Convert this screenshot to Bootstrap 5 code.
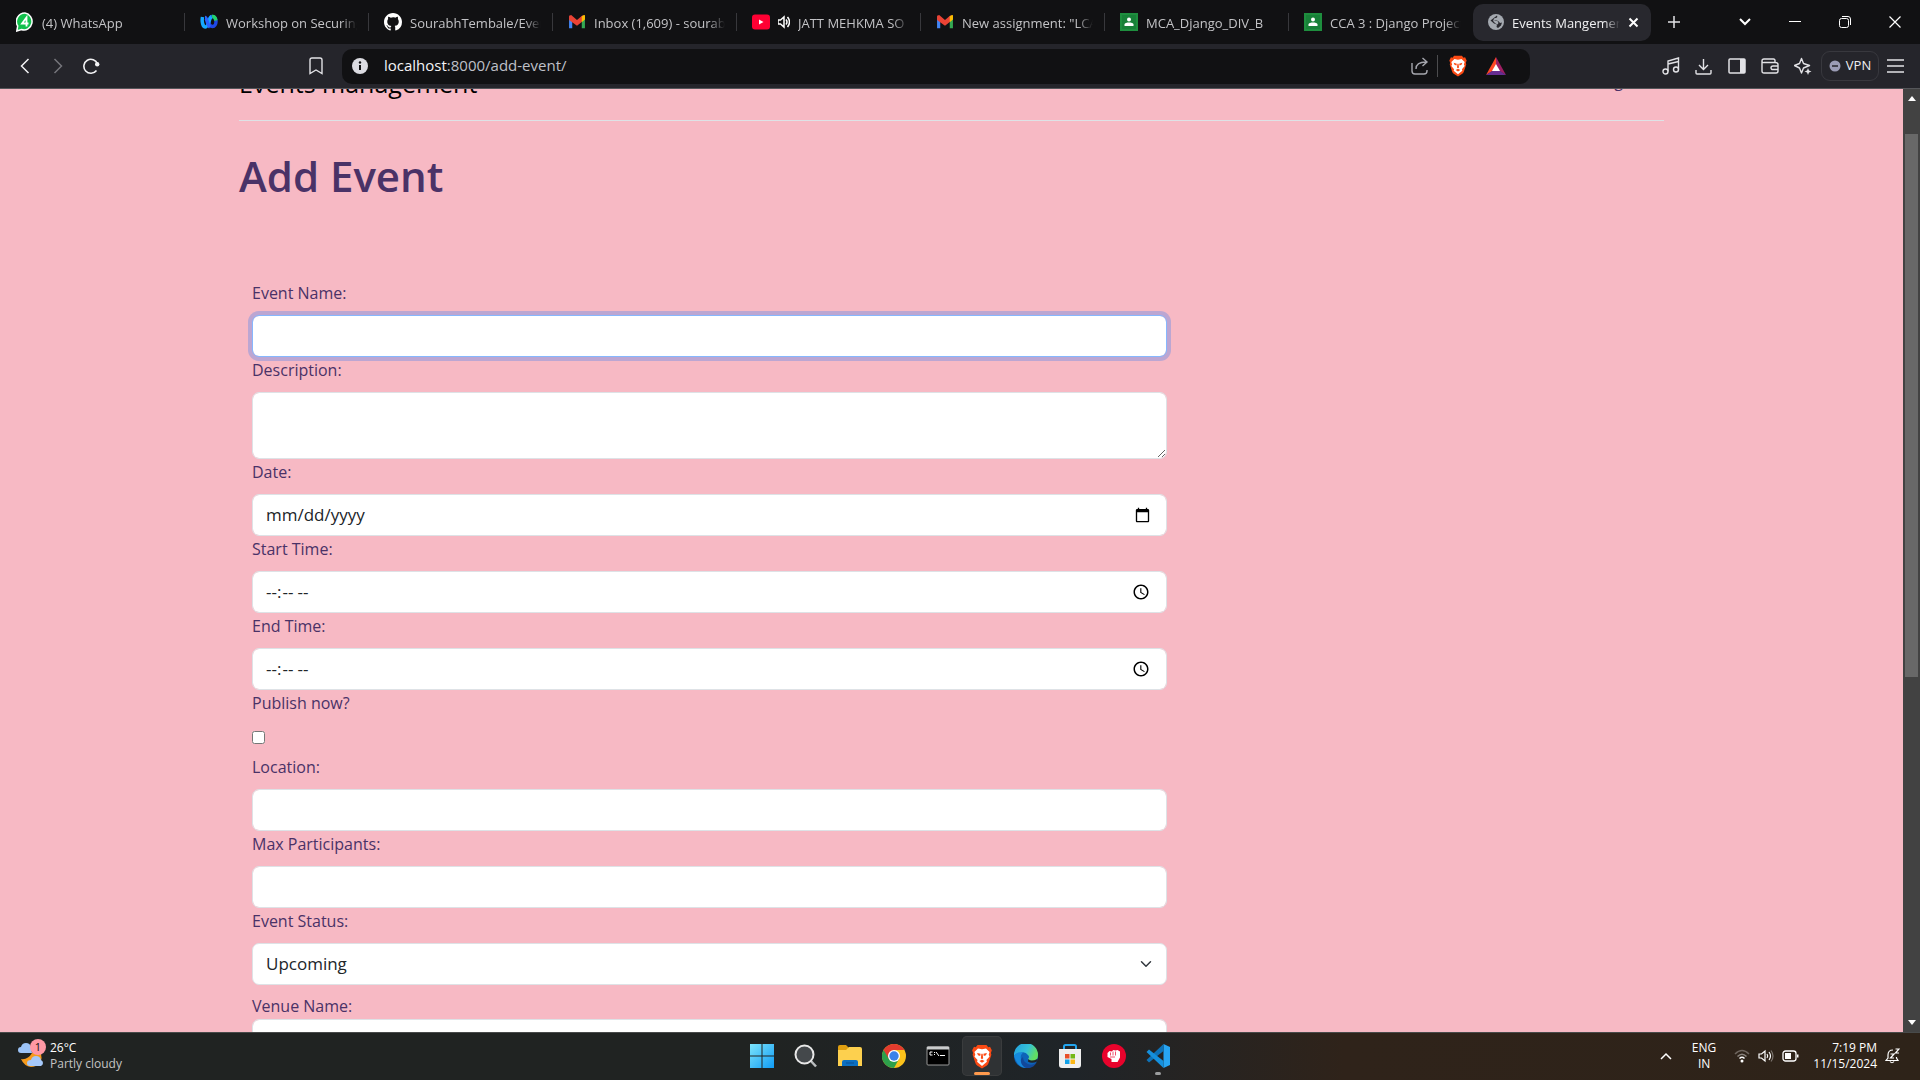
<!DOCTYPE html>
<html lang="en">
<head>
<meta charset="utf-8">
<meta name="viewport" content="width=device-width, initial-scale=1">
<title>Events Mangement</title>
<link href="https://cdn.jsdelivr.net/npm/bootstrap@5.3.0/dist/css/bootstrap.min.css" rel="stylesheet">
<style>
  body { font-family: "Open Sans", "Noto Sans", sans-serif; background: #111113; }
  .tool-btn { background: none; border: 0; padding: 0; color: #e2e2e6; display: flex; align-items: center; justify-content: center; flex: none; }
  svg { display: block; flex: none; }

  /* tab strip */
  .tab-strip { height: 44px; background: #111113; padding-left: 1px; font-size: 13px; color: #c3c3c6; }
  .tab-item { width: 184px; height: 37px; padding: 0 12px 0 15px; gap: 8px; color: inherit; text-decoration: none; flex: 0 1 184px; min-width: 0; }
  .tab-item + .tab-item::before { content: ""; width: 1px; height: 18px; background: #38383c; margin-left: -16px; margin-right: 7px; flex: none; }
  .tab-item.tab-active::before { display: none; }
  .tab-label { flex: 1 1 0; min-width: 0; overflow: hidden; white-space: nowrap; line-height: 20px; padding-top: 2px; -webkit-mask-image: linear-gradient(90deg, #000 calc(100% - 16px), transparent); mask-image: linear-gradient(90deg, #000 calc(100% - 16px), transparent); }
  .tab-active { width: 178px; flex-basis: 178px; background: #28282e; border-radius: 10px; color: #f0f0f2; }
  .win-btn { width: 50px; height: 37px; }

  /* address row */
  .address-row { height: 45px; background: #25252b; border-bottom: 1px solid #55565a; }
  .nav-tool { width: 33px; height: 36px; }
  .bookmark-tool { margin-left: 192px; }
  .address-box { height: 35px; background: #111113; border-radius: 10px; margin-left: 10px; flex: 1 1 0; padding: 0 24px 0 10px; }
  .address-text { font-size: 15px; color: #bfc0c8; line-height: 20px; padding-bottom: 2px; }
  .address-host { color: #f4f4f6; }
  .right-tools { margin-left: 124px; }
  .vpn-btn { border: 1px solid #38383e; border-radius: 9px; width: 58px; height: 30px; font-size: 13px; gap: 5px; color: #efeff2; margin-left: 2px; }

  /* page */
  .page-view { background: #f7b9c4; color: #4a3267; }
  .page-scroll { overflow: hidden; min-width: 0; }
  .page-wrap { max-width: 1449px; padding: 0 12px; margin-top: -29px; }
  .site-head { border-bottom: 1px solid #dee2e6; padding-top: 4px; margin-bottom: 24px; height: 61px; }
  .site-name { font-size: 25px; line-height: 38px; color: #000; text-decoration: none; }
  .site-link { font-size: 16px; line-height: 34px; color: #4a3267; text-decoration: none; padding: 0 16px; }
  .page-title { font-size: 42px; line-height: 53px; font-weight: 600; margin-bottom: 78px; padding-top: 4px; }
  .form-box { padding: 0 22px 0 13px; }
  .field-label { display: block; font-size: 16px; line-height: 26px; margin-bottom: 9px; width: max-content; }
  .form-box .form-control, .form-box .form-select { height: 42px; font-size: 17px; line-height: 26px; border-radius: 7px; padding: 7px 13px; color: #212529; }
  .form-box textarea.form-control { height: 67px; }
  .form-box .field-focused { border-color: #86b7fe; box-shadow: 0 0 0 4px rgba(13, 110, 253, .25); }
  .check-line { height: 29px; padding-top: 6px; }
  .check-line input { display: block; width: 13px; height: 13px; margin: 0; }
  .scroll-track { width: 17px; background: #424242; flex: none; padding: 7px 2px 7px 2px; }
  .scroll-thumb { background: #686868; height: 543px; margin-top: 33px; }

  /* taskbar */
  .task-bar { height: 48px; border-top: 1px solid #484a4a; padding-bottom: 1px; color: #fff; font-size: 12px; line-height: 16px;
    background: linear-gradient(90deg, #202322 0, #202322 40%, #1f2428 56%, #2f231a 70%, #2e2319 100%); }
  .task-side { flex: 1 1 0; }
  .task-btn { width: 40px; height: 40px; border-radius: 5px; position: relative; }
  .task-open { background: #2f3234; box-shadow: inset 0 0 0 1px #3a3c3d; }
  .task-open::after, .task-run::after { content: ""; position: absolute; bottom: 1px; left: 12px; width: 16px; height: 3px; border-radius: 2px; background: #ff9a4d; }
  .task-run::after { left: 17px; width: 6px; background: #9b9d9e; }
  .weather-icon { margin-left: 17px; margin-bottom: 6px; overflow: visible; }
  .weather-note { color: #c4c4c4; }
  .tray-lang { margin: 0 18px 0 20px; }
  .tray-clock { margin: 0 8px 0 14px; }
  .tray-bell { margin-right: 20px; }
</style>
<script src="https://cdn.jsdelivr.net/npm/bootstrap@5.3.0/dist/js/bootstrap.bundle.min.js"></script>
</head>
<body class="vh-100 d-flex flex-column overflow-hidden">

<svg width="0" height="0" class="position-absolute" aria-hidden="true">
  <defs>
    <symbol id="i-gmail" viewBox="0 0 17 17"><path d="M1 3.5v11h3V7z" fill="#4285f4"/><path d="M16 3.5v11h-3V7z" fill="#34a853"/><path d="M13 3.2 16 2v4l-3 2.5z" fill="#fbbc04"/><path d="M1 2.5 3 2l5.500 4.500L14 2l-1 6.500-4.500 3.500L1 6.500z" fill="#ea4335"/><path d="M13 3.200 15 2q1 0 1 1.500V6l-3 2.500z" fill="#fbbc04"/></symbol>
    <symbol id="i-class" viewBox="0 0 18 18"><path d="M0 0h18v18H0z" fill="#1e8e3e"/><path d="M2 2h14v14H2z" fill="#188038"/><circle cx="9" cy="6.500" r="2" fill="#fff"/><path d="M4.500 13v-1.500C4.500 10 7 9.500 9 9.500s4.500.5 4.500 2V13z" fill="#fff"/></symbol>
    <symbol id="i-lion" viewBox="0 0 24 28"><path d="M7 1h10l2 2.500 2-.5 2 4-1 3 .5 2-3 9q-.5 2-2 3L12 27.500 6.500 24q-1.500-1-2-3l-3-9 .5-2-1-3 2-4 2 .5z" fill="#fb4a14"/><path d="M7.500 5l4.500 1 4.500-1L20.500 9l-1 3 1 2-3.500 4 .5 2-5.500 4.500L6.500 20l.5-2-3.500-4 1-2-1-3z" fill="#fff"/><path d="M6.500 10l4 1-.5 2.500-2.500-1zM17.500 10l-4 1 .5 2.500 2.500-1zM11.300 11h1.400l.6 5-1.300 1-1.300-1zM9 19l3-1.500 3 1.500-3 2z" fill="#fb4a14"/></symbol>
  </defs>
</svg>

<nav class="tab-strip d-flex align-items-center flex-shrink-0" aria-label="Tabs">
  <a href="#" class="tab-item d-flex align-items-center">
    <svg width="18" height="20" viewBox="0 0 18 20"><path d="M9 1a8 8.500 0 1 1-3.500 16.500L.8 19l.9-5A8.500 8.500 0 0 1 9 1z" fill="#12c04c" stroke="#fff" stroke-width="1.500"/><path d="M10.500 14.500V5.500L6 11.500h6.500" fill="none" stroke="#fff" stroke-width="1.800"/></svg>
    <span class="tab-label">(4) WhatsApp</span></a>
  <a href="#" class="tab-item d-flex align-items-center">
    <svg width="18" height="18" viewBox="0 0 18 18" fill="none" stroke-width="3.500"><ellipse cx="12.500" cy="8.500" rx="3.500" ry="5" stroke="#1f49e8"/><path d="M2.500 4C1.500 9 3 14 5.500 14c3 0 3.500-9 6-10.500" stroke="#16a9ff"/><path d="M5 4.500c2 0 2.500 8 5 9.500" stroke="#2b62ff"/><path d="M12 3.500c2-.5 3.500 1 3.800 4" stroke="#22d36b"/></svg>
    <span class="tab-label">Workshop on Securing</span></a>
  <a href="#" class="tab-item d-flex align-items-center">
    <svg width="18" height="18" viewBox="0 0 16 16"><path fill="#fff" d="M8 0C3.580 0 0 3.580 0 8c0 3.540 2.290 6.530 5.470 7.590.4.070.55-.17.55-.38 0-.19-.01-.82-.01-1.490-2.010.37-2.530-.49-2.690-.94-.09-.23-.48-.94-.82-1.130-.28-.15-.68-.52-.01-.53.63-.01 1.080.58 1.230.82.72 1.210 1.870.87 2.330.66.070-.52.28-.87.51-1.070-1.780-.2-3.640-.89-3.640-3.950 0-.87.31-1.590.82-2.150-.08-.2-.36-1.020.080-2.120 0 0 .67-.21 2.200.82A7.600 7.600 0 0 1 8 3.860c.68 0 1.360.09 2 .27 1.530-1.040 2.200-.82 2.200-.82.44 1.100.16 1.920.080 2.120.51.560.82 1.270.82 2.150 0 3.070-1.870 3.750-3.650 3.950.29.25.54.73.54 1.480 0 1.070-.01 1.930-.01 2.200 0 .21.15.46.55.38A8 8 0 0 0 16 8c0-4.420-3.580-8-8-8z"/></svg>
    <span class="tab-label">SourabhTembale/Even</span></a>
  <a href="#" class="tab-item d-flex align-items-center">
    <svg width="18" height="18"><use href="#i-gmail"/></svg>
    <span class="tab-label">Inbox (1,609) - sourabl</span></a>
  <a href="#" class="tab-item d-flex align-items-center">
    <svg width="18" height="18" viewBox="0 0 18 18"><rect y="1.500" width="18" height="15" rx="3" fill="#f03"/><path d="M7 6.500v5L11.500 9z" fill="#fff"/></svg>
    <svg width="12" height="14" viewBox="1 0 12 14"><path d="M1 5h2.500L7 2v10L3.500 9H1z" fill="none" stroke="#fff" stroke-width="1.500"/><path d="M9 4.500q2 2.500 0 5M10.500 2q4 5 0 10" fill="none" stroke="#fff" stroke-width="1.500"/></svg>
    <span class="tab-label">JATT MEHKMA SO</span></a>
  <a href="#" class="tab-item d-flex align-items-center">
    <svg width="18" height="18"><use href="#i-gmail"/></svg>
    <span class="tab-label">New assignment: "LCA</span></a>
  <a href="#" class="tab-item d-flex align-items-center">
    <svg width="18" height="18"><use href="#i-class"/></svg>
    <span class="tab-label">MCA_Django_DIV_B</span></a>
  <a href="#" class="tab-item d-flex align-items-center">
    <svg width="18" height="18"><use href="#i-class"/></svg>
    <span class="tab-label">CCA 3 : Django Project</span></a>
  <a href="#" class="tab-item tab-active d-flex align-items-center" aria-current="page">
    <svg width="16" height="18" viewBox="0 0 16 16"><circle cx="8" cy="8" r="8" fill="#a4a9b0"/><path d="M9 1.500q1 2-1.500 2.500T6 6l3 .5q2 .5 3 2.500l2-.5-1 3-3 2.500-1.500-1 .5-2.500-3-1-3.500-3" fill="#28282e"/><path d="M5 5.500l2 1 2.500.5 1 2-1 1.500-2-1-2-2z" fill="#a4a9b0"/></svg>
    <span class="tab-label">Events Mangement</span>
    <svg width="11" height="11" viewBox="0 0 11 11"><path d="M1.500 1.500l8 8m0-8l-8 8" stroke="#fff" stroke-width="2"/></svg></a>
  <button class="tool-btn ms-3" aria-label="New tab"><svg width="14" height="14" viewBox="0 0 14 14"><path d="M7 1v12M1 7h12" stroke="#e2e2e6" stroke-width="1.500"/></svg></button>
  <div class="d-flex ms-auto">
    <button class="tool-btn win-btn" aria-label="Tab list"><svg width="12" height="8" viewBox="0 0 12 8"><path d="M1 1l5 5 5-5" fill="none" stroke="#fff" stroke-width="2"/></svg></button>
    <button class="tool-btn win-btn" aria-label="Minimize"><svg width="12" height="12" viewBox="0 0 12 12"><path d="M0 5.500h12" stroke="#fff"/></svg></button>
    <button class="tool-btn win-btn" aria-label="Restore"><svg width="12" height="12" viewBox="0 0 12 12" fill="none" stroke="#fff"><rect x=".5" y="2.500" width="9" height="9" rx="2"/><path d="M3 .5h6q2.500 0 2.500 2.500v6"/></svg></button>
    <button class="tool-btn win-btn" aria-label="Close"><svg width="12" height="12" viewBox="0 0 12 12"><path d="M.5.5l11 11m0-11l-11 11" stroke="#fff" stroke-width="1.200"/></svg></button>
  </div>
</nav>

<div class="address-row d-flex align-items-center flex-shrink-0 px-2">
  <button class="tool-btn nav-tool" aria-label="Back"><svg width="10" height="16" viewBox="0 0 10 16"><path d="M8.500 1L1.500 8l7 7" fill="none" stroke="#f2f2f4" stroke-width="1.500"/></svg></button>
  <button class="tool-btn nav-tool" aria-label="Forward"><svg width="10" height="16" viewBox="0 0 10 16"><path d="M1.500 1l7 7-7 7" fill="none" stroke="#75757b" stroke-width="1.500"/></svg></button>
  <button class="tool-btn nav-tool" aria-label="Reload"><svg width="18" height="17" viewBox="0 0 18 17"><path d="M15.500 6A7 7 0 1 0 14.500 12.500" fill="none" stroke="#f2f2f4" stroke-width="1.600"/><circle cx="15.200" cy="6.300" r="2.200" fill="#f2f2f4"/></svg></button>
  <button class="tool-btn nav-tool bookmark-tool" aria-label="Bookmark"><svg width="14" height="18" viewBox="0 0 14 18"><path d="M1 3q0-2 2-2h8q2 0 2 2v13.500L7 13l-6 3.500z" fill="none" stroke="#e2e2e6" stroke-width="1.400"/></svg></button>
  <div class="address-box d-flex align-items-center">
    <svg width="16" height="16" viewBox="0 0 16 16"><circle cx="8" cy="8" r="8" fill="#dcdce2"/><path d="M8 7v5" stroke="#111113" stroke-width="2"/><circle cx="8" cy="4.500" r="1.200" fill="#111113"/></svg>
    <span class="address-text ps-3"><span class="address-host">localhost</span>:8000/add-event/</span>
    <div class="d-flex align-items-center ms-auto">
      <button class="tool-btn" aria-label="Share"><svg width="18" height="18" viewBox="0 0 18 18"><path d="M1 6v8q0 3 3 3h9q3 0 3-3v-1M5 12q0-7 10-7M11.500 1l4.500 4-4.500 4" fill="none" stroke="#a5a6ad" stroke-width="1.400"/></svg></button>
      <span class="vr ms-2 me-2 text-white"></span>
      <button class="tool-btn" aria-label="Shields"><svg width="24" height="22"><use href="#i-lion"/></svg></button>
      <button class="tool-btn ms-3" aria-label="Rewards"><svg width="20" height="18" viewBox="0 0 20 18"><path d="M10 0L0 18l10-6z" fill="#ff4724"/><path d="M10 0l10 18-10-6z" fill="#9e1f63"/><path d="M0 18h20l-6-4H6z" fill="#662d91"/><path d="M10 7l4 7H6z" fill="#fff"/></svg></button>
    </div>
  </div>
  <div class="right-tools d-flex align-items-center">
    <button class="tool-btn nav-tool" aria-label="Media"><svg width="18" height="18" viewBox="0 0 18 18" fill="none" stroke="#e2e2e6" stroke-width="1.400"><circle cx="3.500" cy="14.500" r="2.500"/><circle cx="14" cy="12.500" r="2.500"/><path d="M6 14.500V4l10.500-3v11.500M6 7l10.500-2.500"/></svg></button>
    <button class="tool-btn nav-tool" aria-label="Downloads"><svg width="17" height="17" viewBox="0 0 17 17" fill="none" stroke="#e2e2e6" stroke-width="1.400"><path d="M8.500 1v10M4 7l4.500 4.500L13 7M1 12v3q0 1 1 1h13q1 0 1-1v-3"/></svg></button>
    <button class="tool-btn nav-tool" aria-label="Sidebar"><svg width="18" height="16" viewBox="0 0 18 16"><rect x="1" y="1" width="16" height="14" rx="1" fill="none" stroke="#e2e2e6" stroke-width="1.500"/><path d="M12 1h5v14h-5z" fill="#e2e2e6"/></svg></button>
    <button class="tool-btn nav-tool" aria-label="Wallet"><svg width="18" height="16" viewBox="0 0 18 16" fill="none" stroke="#e2e2e6" stroke-width="1.400"><path d="M14 4V2.500Q14 1 12.500 1H3Q1 1 1 3t2 1.500h11q3 0 3 2V13q0 2-2 2H3q-2 0-2-2V3M17 8h-5q-2 0-2 1.800t2 1.700h5"/></svg></button>
    <button class="tool-btn nav-tool" aria-label="Assistant"><svg width="18" height="18" viewBox="0 0 18 18"><path d="M7.500 1.500l2 5 6 2-6 2.500-2 5-2-5-5-2.500 5-2z" fill="none" stroke="#e2e2e6" stroke-width="1.400" stroke-linejoin="round"/><path d="M14 11l1 2.500 2.500 1L15 15.500 14 18l-1-2.500-2.500-1 2.500-1z" fill="#e2e2e6"/></svg></button>
    <button class="tool-btn vpn-btn"><svg width="12" height="12" viewBox="0 0 12 12"><circle cx="6" cy="6" r="5.500" fill="#9b9cb5"/><path d="M3 6h6" stroke="#25252b" stroke-width="1.500"/></svg>VPN</button>
    <button class="tool-btn nav-tool" aria-label="Menu"><svg width="17" height="14" viewBox="0 0 17 14"><path d="M0 1h17M0 7h17M0 13h17" stroke="#e2e2e6" stroke-width="1.500"/></svg></button>
  </div>
</div>

<div class="page-view d-flex flex-grow-1 overflow-hidden">
  <div class="page-scroll flex-grow-1">
    <div class="page-wrap mx-auto">
      <header class="site-head d-flex justify-content-between align-items-start">
        <a href="#" class="site-name">Events management</a>
        <a href="#" class="site-link">Logout</a>
      </header>
      <h1 class="page-title">Add Event</h1>
      <form class="row g-0">
        <div class="col-8 form-box">
          <label class="field-label" for="event-name">Event Name:</label>
          <input class="form-control field-focused" type="text" id="event-name">
          <label class="field-label" for="description">Description:</label>
          <textarea class="form-control" id="description"></textarea>
          <label class="field-label" for="date">Date:</label>
          <input class="form-control" type="date" id="date">
          <label class="field-label" for="start-time">Start Time:</label>
          <input class="form-control" type="time" id="start-time">
          <label class="field-label" for="end-time">End Time:</label>
          <input class="form-control" type="time" id="end-time">
          <label class="field-label" for="publish">Publish now?</label>
          <div class="check-line"><input type="checkbox" id="publish"></div>
          <label class="field-label" for="location">Location:</label>
          <input class="form-control" type="text" id="location">
          <label class="field-label" for="max">Max Participants:</label>
          <input class="form-control" type="text" id="max">
          <label class="field-label" for="status">Event Status:</label>
          <select class="form-select" id="status"><option>Upcoming</option></select>
          <label class="field-label mt-2 mb-0" for="venue">Venue Name:</label>
          <input class="form-control" type="text" id="venue">
        </div>
      </form>
    </div>
  </div>
  <div class="scroll-track d-flex flex-column align-items-stretch">
    <svg class="mx-auto" width="8" height="5" viewBox="0 0 8 5"><path d="M4 0l4 5H0z" fill="#fff"/></svg>
    <div class="scroll-thumb"></div>
    <svg class="mx-auto mt-auto" width="8" height="5" viewBox="0 0 8 5"><path d="M4 5L0 0h8z" fill="#fff"/></svg>
  </div>
</div>

<footer class="task-bar d-flex align-items-center flex-shrink-0">
  <div class="task-side d-flex align-items-center">
    <svg class="weather-icon" width="29" height="28" viewBox="0 0 29 28"><path d="M4 20q7 1 11-6l8-2q3 7 0 12-4 4-9 4-7-1-10-8z" fill="#f59a1d"/><path d="M4 14q-3 0-3-3t3-3q1-4 5-4t5 4l1 6z" fill="#9cc3f7"/><path d="M13 27q-3 0-3-3t4-3q1-4 5-4t5 4q2 1 2 3t-2 3z" fill="#a5c8fa"/><circle cx="21" cy="8" r="8" fill="#ff98a4"/><text x="21" y="12" font-size="11" text-anchor="middle" fill="#111">1</text></svg>
    <div class="ps-1">26°C<br><span class="weather-note">Partly cloudy</span></div>
  </div>
  <div class="d-flex gap-1">
    <button class="tool-btn task-btn" aria-label="Start"><svg width="24" height="24" viewBox="0 0 24 24"><defs><linearGradient id="g-win" x2="1" y2="1"><stop stop-color="#7de4fb"/><stop offset="1" stop-color="#109cf5"/></linearGradient></defs><path d="M0 0h11.500v11.500H0zM12.500 0H24v11.500H12.500zM0 12.500h11.500V24H0zM12.500 12.500H24V24H12.500z" fill="url(#g-win)"/></svg></button>
    <button class="tool-btn task-btn" aria-label="Search"><svg width="24" height="24" viewBox="0 0 24 24"><path d="M16 16l6 6.500" stroke="#b9bcbe" stroke-width="2.500"/><circle cx="10.500" cy="10.500" r="9" fill="#44484b" stroke="#e8e8e8" stroke-width="2"/></svg></button>
    <button class="tool-btn task-btn" aria-label="Files"><svg width="24" height="24" viewBox="0 0 24 24"><path d="M0 3q0-2 2-2h6l3 3v6H0z" fill="#e09f10"/><path d="M0 6h8l3-3h11q2 0 2 2v17H0z" fill="#fdd04e"/><path d="M4 22v-4q0-2 2-2h12q2 0 2 2v4z" fill="#0b6fc2"/><path d="M8 19h8" stroke="#0a4f92"/></svg></button>
    <button class="tool-btn task-btn" aria-label="Chrome"><svg width="24" height="24" viewBox="0 0 24 24"><circle cx="12" cy="12" r="12" fill="#fcc21b"/><path d="M1.600 6A12 12 0 0 0 12 24l5-9-5-3z" fill="#2da04b"/><path d="M12 6H22.400A12 12 0 0 0 1.600 6L7 15z" fill="#e33b2e"/><circle cx="12" cy="12" r="6" fill="#fff"/><circle cx="12" cy="12" r="4.700" fill="#3b82ea"/></svg></button>
    <button class="tool-btn task-btn" aria-label="Terminal"><svg width="24" height="20" viewBox="0 0 24 20"><rect x="1" y=".5" width="22" height="18.500" rx="1" fill="#000" stroke="#999"/><path d="M1 1h22v2.500H1z" fill="#c9cccd"/><path d="M6.500 6H4v3h2.500M8.500 6v1m0 1v1M10 6l3 4M14 9.500h5" stroke="#fff" fill="none"/></svg></button>
    <button class="tool-btn task-btn task-open" aria-label="Brave"><svg width="22" height="25"><use href="#i-lion"/></svg></button>
    <button class="tool-btn task-btn" aria-label="Edge"><svg width="24" height="24" viewBox="0 0 24 24"><defs><linearGradient id="g-edge" x2="1" y2=".4"><stop stop-color="#1f9de0"/><stop offset=".6" stop-color="#35c1d8"/><stop offset="1" stop-color="#62df62"/></linearGradient></defs><circle cx="12" cy="12" r="12" fill="#0d63b8"/><path d="M0 11A12 12 0 0 1 24 11q0 6-6 6-3 0-4-2 2-2 0-4-3-4-8-2Q2 9 0 12z" fill="url(#g-edge)"/><path d="M0 12Q3 7 9 8.500 5 12 8 18q2 4 6 5.700Q4 25 0 12z" fill="#1689dc"/><path d="M9 13q0 5 5 7t9-2q-4 7-11 6-6-3-5-9z" fill="#12489a"/><path d="M14.500 15q2 3 9 0l-.6 2.500q-5 2.500-9 0z" fill="#1f2427"/></svg></button>
    <button class="tool-btn task-btn" aria-label="Store"><svg width="24" height="24" viewBox="0 0 24 24"><path d="M6 6V2.500Q6 1 7.500 1h9Q18 1 18 2.500V6" fill="none" stroke="#23a5ee" stroke-width="2"/><path d="M1 5h22v16q0 3-3 3H4q-3 0-3-3z" fill="#efefef"/><path d="M7 10h4.500v4.500H7z" fill="#e8502a"/><path d="M12.500 10H17v4.500h-4.500z" fill="#74b816"/><path d="M7 15.500h4.500V20H7z" fill="#12a1e8"/><path d="M12.500 15.500H17V20h-4.500z" fill="#fbb716"/></svg></button>
    <button class="tool-btn task-btn" aria-label="Games"><svg width="24" height="24" viewBox="0 0 24 24"><circle cx="12" cy="12" r="12" fill="#e8032c"/><path d="M5.500 9l2-2 2 .5 2-1.500 2 .5 2-.5 2.500 1.500v6l-2.500 4.500H9.500v-3l-4-2z" fill="#fff"/><path d="M8.500 8.500v3M11 7.500v4M13.500 7.500v4M8 13h5" stroke="#e8032c" stroke-width=".7"/></svg></button>
    <button class="tool-btn task-btn task-run" aria-label="Code"><svg width="24" height="24" viewBox="0 0 24 24"><path d="M17.500 0L24 3v18l-6.500 3z" fill="#27a5f3"/><path d="M17.500 0v7L3 18.500.5 16z" fill="#0d72b8"/><path d="M17.500 24v-7L3 5.500.5 8z" fill="#1590dd"/></svg></button>
  </div>
  <div class="task-side d-flex align-items-center justify-content-end">
    <svg width="12" height="8" viewBox="0 0 12 8"><path d="M1 7l5-5 5 5" fill="none" stroke="#fff" stroke-width="1.500"/></svg>
    <div class="tray-lang text-center">ENG<br>IN</div>
    <svg width="16" height="14" viewBox="0 0 16 14" fill="none"><path d="M1 5q7-7 14 0" stroke="#6e655e" stroke-width="1.500"/><path d="M3.500 7.500q4.500-4.500 9 0" stroke="#8b847e" stroke-width="1.500"/><path d="M5.500 9.500q2.500-2.500 5 0" stroke="#fff" stroke-width="1.500"/><circle cx="8" cy="12" r="1.500" fill="#fff"/></svg>
    <svg class="ms-2" width="16" height="14" viewBox="0 0 16 14" fill="none" stroke="#fff" stroke-width="1.200"><path d="M1 5h2.500L7 2v10L3.500 9H1zM9 5q1.500 2 0 4M11 3q3 4 0 8"/><path d="M13 1.500q4 5.500 0 11" stroke="#7c756f"/></svg>
    <svg class="ms-2" width="17" height="12" viewBox="0 0 17 12"><rect x="1" y="1" width="13" height="10" rx="2.500" fill="none" stroke="#fff" stroke-width="1.300"/><path d="M3 3h6v6H3z" fill="#fff"/><path d="M15 4.500h1.500v3H15z" fill="#fff"/></svg>
    <div class="tray-clock text-end">7:19 PM<br>11/15/2024</div>
    <svg class="tray-bell" width="15" height="16" viewBox="0 0 15 16" fill="none" stroke="#fff" stroke-width="1.200"><path d="M8 2Q3 2 3 7v3l-2 2.500h12L11.500 10V9M5 13.500q2 2.500 4 0M5.500 6h3.500l-3.500 4H9M10.500 1h3.500l-3.500 4H14"/></svg>
  </div>
</footer>
</body>
</html>
